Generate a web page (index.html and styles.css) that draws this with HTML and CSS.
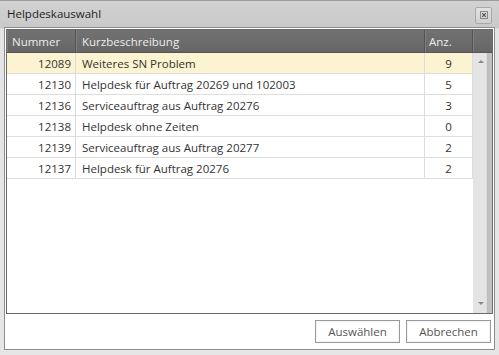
FILE: index.html
```html
<!DOCTYPE html>
<html lang="de">
<head>
    <meta charset="UTF-8">
    <title>Helpdeskauswahl</title>
    <link rel="stylesheet" href="styles.css">
</head>
<body>
    <div class="window">
        <div class="titlebar">
            <span class="title">Helpdeskauswahl</span>
            <div class="close-btn">
                <svg width="8" height="8" viewBox="0 0 8 8">
                    <rect x="0.5" y="0.5" width="7" height="7" fill="none" stroke="#8a8a8a" stroke-width="1"/>
                    <path d="M2.2 2.2 L5.8 5.8 M5.8 2.2 L2.2 5.8" stroke="#555" stroke-width="1.2"/>
                </svg>
            </div>
        </div>

        <div class="panel">
            <div class="grid">
                <div class="grid-head">
                    <div class="col-num">Nummer</div>
                    <div class="col-desc">Kurzbeschreibung</div>
                    <div class="col-anz">Anz.</div>
                    <div class="col-scroll"></div>
                </div>
                <div class="grid-body">
                    <div class="rows">
                        <div class="row selected">
                            <div class="col-num">12089</div>
                            <div class="col-desc">Weiteres SN Problem</div>
                            <div class="col-anz">9</div>
                        </div>
                        <div class="row">
                            <div class="col-num">12130</div>
                            <div class="col-desc">Helpdesk für Auftrag 20269 und 102003</div>
                            <div class="col-anz">5</div>
                        </div>
                        <div class="row">
                            <div class="col-num">12136</div>
                            <div class="col-desc">Serviceauftrag aus Auftrag 20276</div>
                            <div class="col-anz">3</div>
                        </div>
                        <div class="row">
                            <div class="col-num">12138</div>
                            <div class="col-desc">Helpdesk ohne Zeiten</div>
                            <div class="col-anz">0</div>
                        </div>
                        <div class="row">
                            <div class="col-num">12139</div>
                            <div class="col-desc">Serviceauftrag aus Auftrag 20277</div>
                            <div class="col-anz">2</div>
                        </div>
                        <div class="row">
                            <div class="col-num">12137</div>
                            <div class="col-desc">Helpdesk für Auftrag 20276</div>
                            <div class="col-anz">2</div>
                        </div>
                    </div>
                    <div class="scrollbar">
                        <span class="arrow up"></span>
                        <span class="arrow down"></span>
                    </div>
                </div>
            </div>

            <div class="buttons">
                <button>Auswählen</button>
                <button>Abbrechen</button>
            </div>
        </div>
    </div>
</body>
</html>
```

FILE: styles.css
```css
body {
    margin: 0;
    font-family: 'Open Sans', 'Liberation Sans', sans-serif;
    font-size: 11.5px;
    color: #333;
    background: #e6e6e6;
}

.window {
    width: 499px;
    height: 355px;
    box-sizing: border-box;
    border-top: 1px solid #9c9c9c;
    background: linear-gradient(to bottom, #d2d2d2 0, #c9c9c9 27px, #e4e4e4 28px, #e6e6e6 100%);
    display: flex;
    flex-direction: column;
}

.titlebar {
    height: 26px;
    display: flex;
    align-items: center;
    justify-content: space-between;
    padding: 0 7px 0 7px;
}

.title {
    font-size: 11.5px;
    color: #1e1e1e;
    margin-top: -1px;
}

.close-btn {
    width: 15px;
    height: 15px;
    border: 1px solid #a8a8a8;
    border-radius: 2px;
    background: linear-gradient(#e2e2e2, #cfcfcf);
    display: flex;
    align-items: center;
    justify-content: center;
    margin-top: 2px;
}

.panel {
    margin: 0 4px 0 4px;
    height: 319px;
    border: 1px solid #8c8c8c;
    background: #fff;
    padding: 1px;
    display: flex;
    flex-direction: column;
}

.grid {
    border: 1px solid #6a6a6a;
    height: 283px;
    display: flex;
    flex-direction: column;
}

.grid-head {
    height: 22px;
    display: flex;
    background: linear-gradient(#727272, #666);
    color: #ececec;
    font-size: 11.5px;
    border-bottom: 1px solid #555;
}

.grid-head > div {
    display: flex;
    align-items: center;
    border-right: 1px solid #545454;
    box-shadow: inset 1px 0 0 #7e7e7e;
}

.grid-head .col-num {
    padding-left: 5px;
    justify-content: flex-start;
}

.grid-head .col-anz {
    padding-left: 4px;
    justify-content: flex-start;
}

.grid-head .col-scroll {
    border-right: none;
}

.col-num {
    width: 69px;
    flex: none;
    box-sizing: border-box;
}

.col-desc {
    width: 349px;
    flex: none;
    box-sizing: border-box;
    padding-left: 6px;
}

.col-anz {
    width: 48px;
    flex: none;
    box-sizing: border-box;
}

.col-scroll {
    flex: 1;
}

.grid-body {
    flex: 1;
    display: flex;
}

.rows {
    width: 466px;
    flex: none;
}

.row {
    height: 21px;
    box-sizing: border-box;
    display: flex;
    border-bottom: 1px solid #dedede;
}

.row > div {
    display: flex;
    align-items: center;
    border-right: 1px solid #dcdcdc;
}

.row .col-num {
    justify-content: flex-end;
    padding-right: 4px;
}

.row .col-anz {
    justify-content: center;
}

.row.selected {
    background: #fcf4d0;
}

.scrollbar {
    flex: 1;
    background: linear-gradient(to right, #e4e4e4 0, #e4e4e4 70%, #bdbdbd 75%, #c4c4c4 100%);
    display: flex;
    flex-direction: column;
    justify-content: space-between;
    align-items: center;
    padding: 7px 4px 8px 0;
}

.arrow {
    width: 0;
    height: 0;
    border-left: 3px solid transparent;
    border-right: 3px solid transparent;
}

.arrow.up {
    border-bottom: 3px solid #8a8a8a;
}

.arrow.down {
    border-top: 3px solid #8a8a8a;
}

.buttons {
    flex: 1;
    display: flex;
    justify-content: flex-end;
    align-items: center;
    gap: 6px;
    padding-right: 2px;
}

button {
    width: 85px;
    height: 23px;
    font-family: inherit;
    font-size: 11.5px;
    color: #555;
    background: #fff;
    border: 1px solid #9a9a9a;
    box-shadow: inset 0 0 0 1px #f4f4f4;
    padding: 0;
}
```
